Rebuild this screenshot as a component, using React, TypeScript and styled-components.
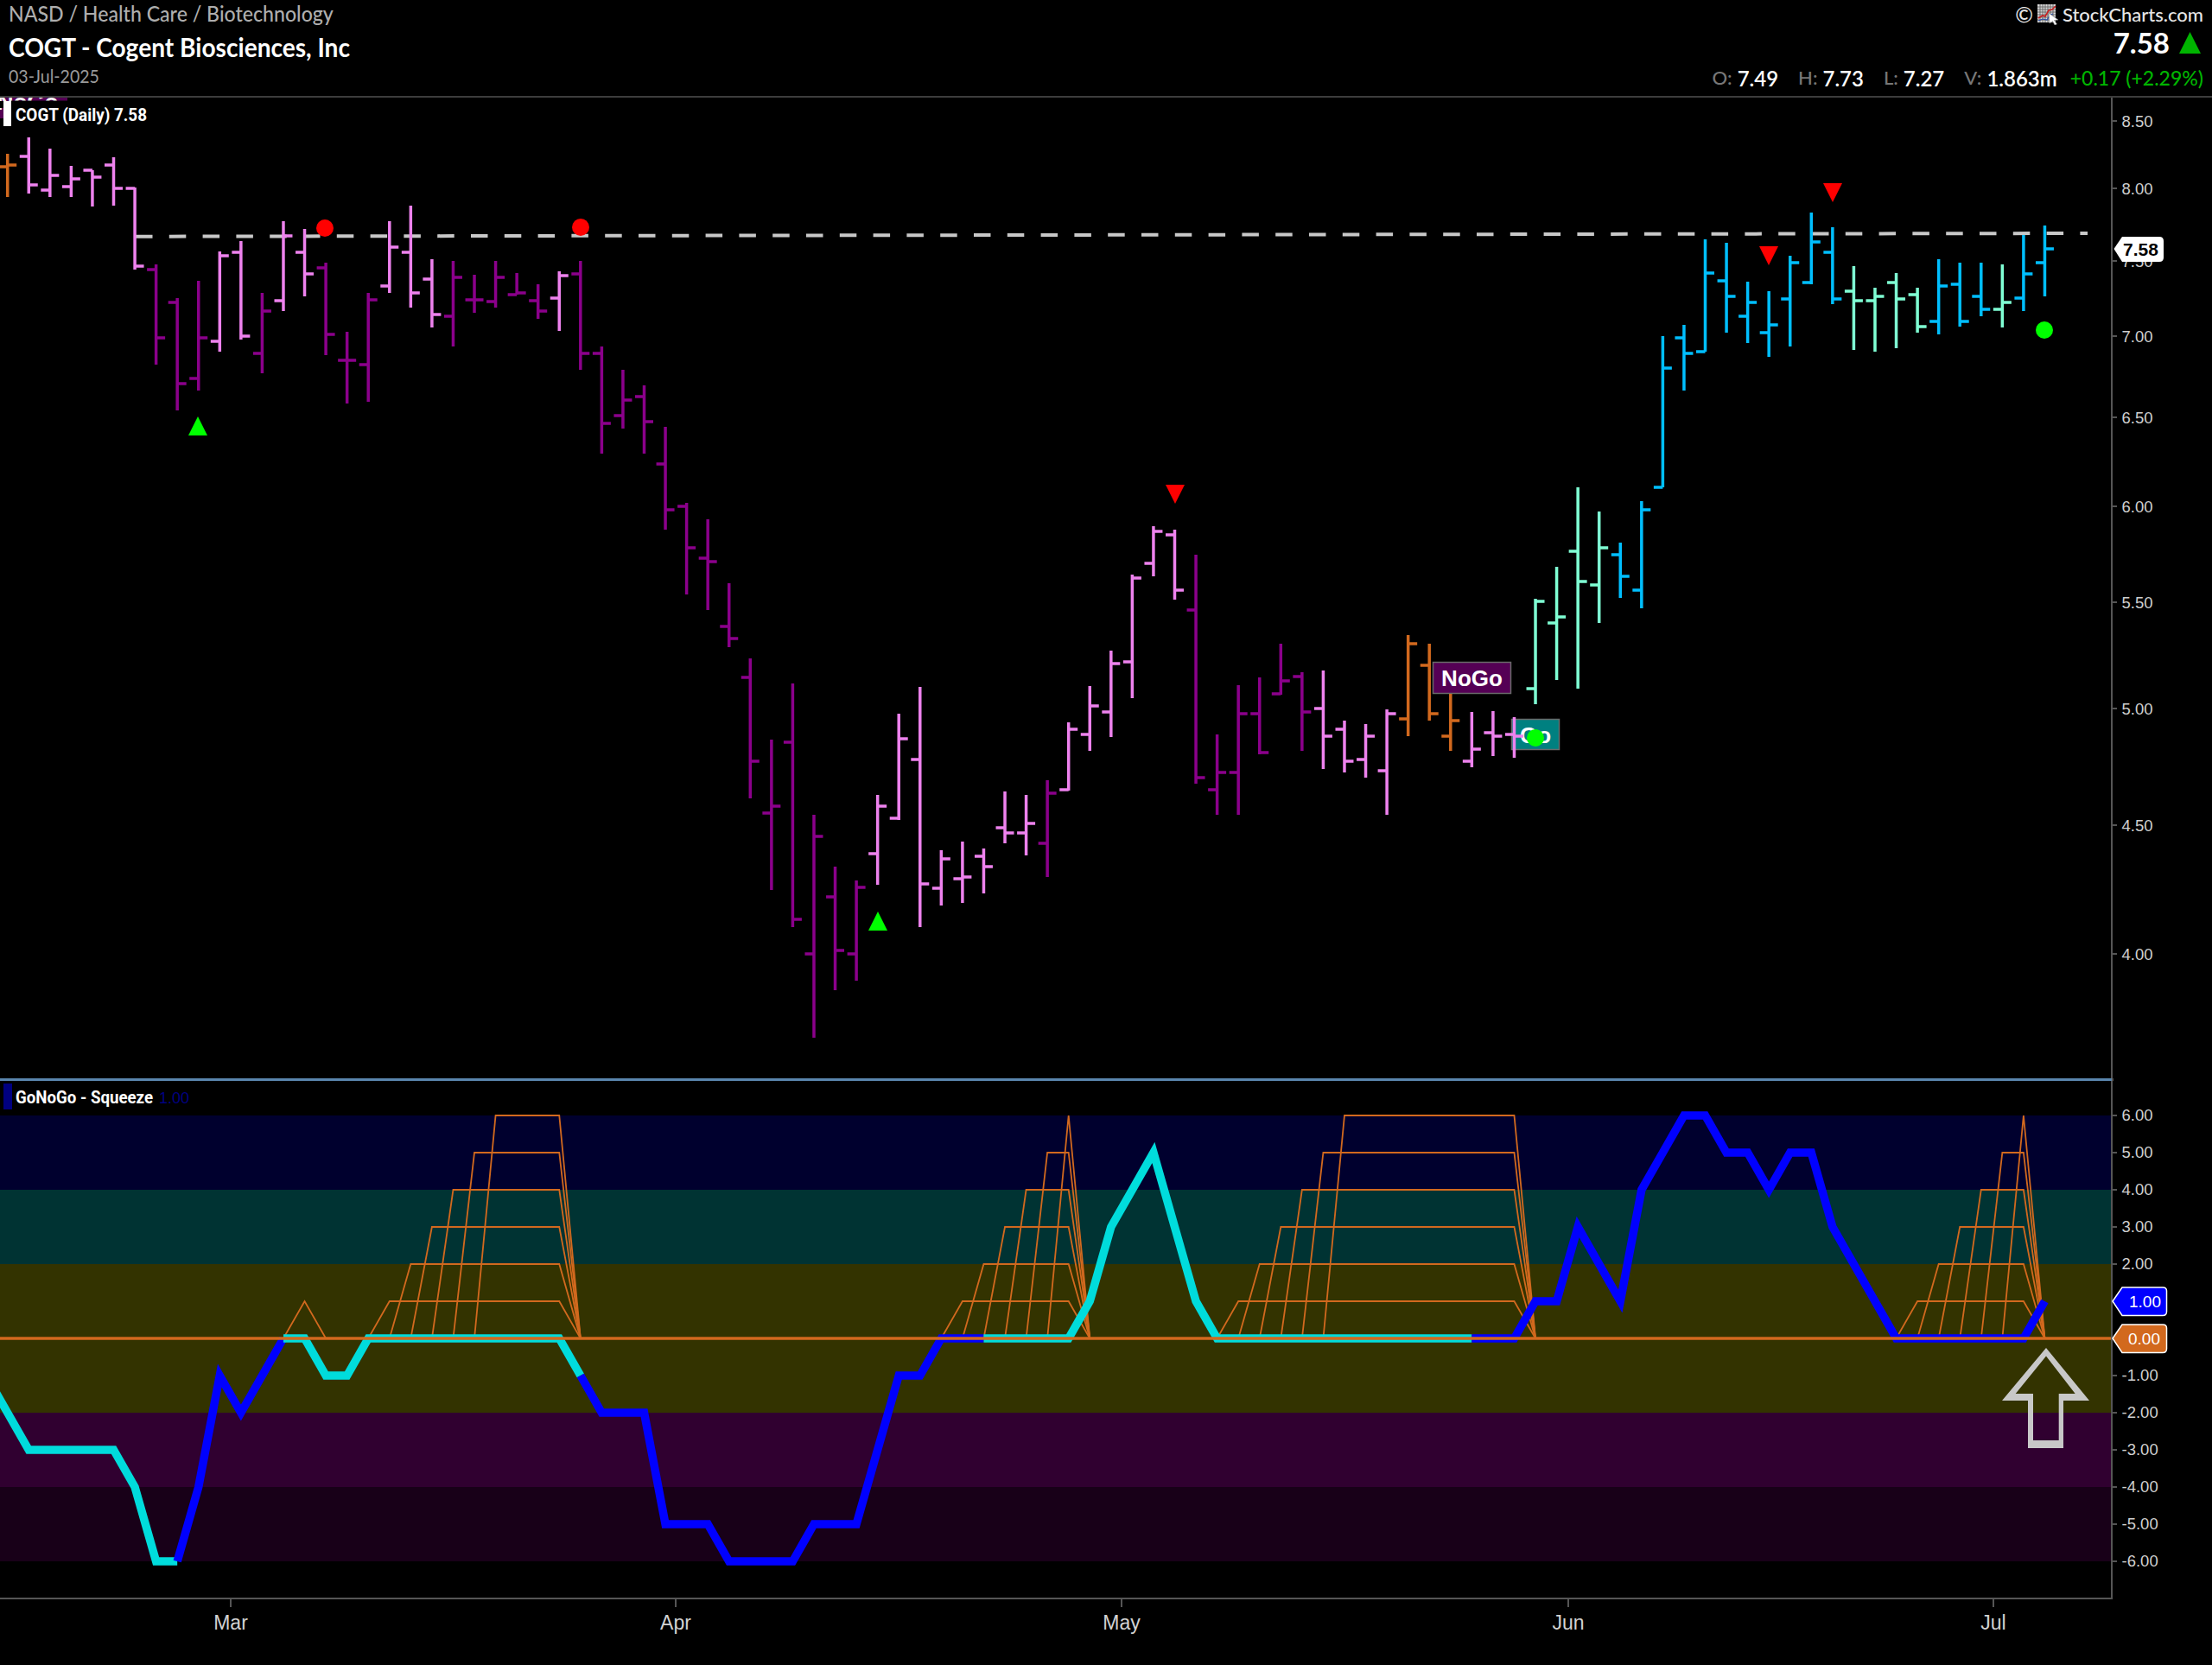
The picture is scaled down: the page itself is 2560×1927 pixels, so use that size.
import React from "react";
import styled, { createGlobalStyle } from "styled-components";

const GlobalStyle = createGlobalStyle`
  html, body { margin: 0; padding: 0; background: #000; }
  #root { width: 2560px; height: 1927px; }
`;

const Page = styled.div`
  width: 2560px;
  height: 1927px;
  background: #000;
  display: flex;
  flex-direction: column;
  overflow: hidden;
  font-family: Lato, "Liberation Sans", sans-serif;
`;
const Header = styled.header`
  height: 111px;
  box-sizing: content-box;
  border-bottom: 2px solid #3c3c3c;
  display: flex;
  justify-content: space-between;
  padding: 0 10px;
`;
const HeaderLeft = styled.div`
  display: flex;
  flex-direction: column;
`;
const Exchange = styled.div`
  margin-top: 0;
  font-size: 25px;
  line-height: 31px;
  font-weight: 500;
  color: #aeaeae;
  white-space: nowrap;
  transform: scaleX(0.925);
  transform-origin: left center;
`;
const Title = styled.div`
  margin-top: 5px;
  font-size: 31px;
  line-height: 36px;
  font-weight: 700;
  color: #fff;
  white-space: nowrap;
  transform: scaleX(0.906);
  transform-origin: left center;
`;
const DateLine = styled.div`
  margin-top: 3px;
  font-size: 21px;
  line-height: 26px;
  color: #9a9a9a;
  white-space: nowrap;
  transform: scaleX(0.93);
  transform-origin: left center;
`;
const HeaderRight = styled.div`
  display: flex;
  flex-direction: column;
  align-items: flex-end;
`;
const Brand = styled.div`
  margin-top: 3px;
  display: flex;
  align-items: center;
  gap: 6px;
  height: 26px;
  color: #e6e6e6;
  font-size: 22px;
  font-weight: 500;
  white-space: nowrap;
`;
const Copyright = styled.span`
  font-size: 25px;
  margin-right: -1px;
`;
const BrandMark = styled.svg`
  width: 25px;
  height: 25px;
  display: block;
  margin-right: -2px;
`;
const PriceRow = styled.div`
  margin-top: 5px;
  display: flex;
  align-items: center;
  gap: 11px;
  height: 30px;
  margin-right: 3px;
`;
const LastPrice = styled.span`
  font-size: 33px;
  font-weight: 700;
  color: #fff;
`;
const UpMark = styled.svg`
  width: 25px;
  height: 25px;
  display: block;
`;
const QuoteRow = styled.div`
  margin-top: 11px;
  display: flex;
  align-items: center;
  height: 30px;
  font-size: 24px;
  white-space: nowrap;
`;
const QuoteItem = styled.span`
  display: inline-flex;
  gap: 6px;
  margin-right: 23px;
`;
const QuoteLabel = styled.span`
  color: #777;
  font-size: 22px;
  font-weight: 500;
`;
const QuoteValue = styled.span`
  color: #fff;
  font-weight: 600;
`;
const QuoteChange = styled.span`
  color: #00b400;
  font-size: 23px;
  font-weight: 500;
  margin-left: -8px;
`;
const ChartSvg = styled.svg`
  display: block;
  width: 2560px;
  flex: none;
`;
const Separator = styled.div`
  flex: none;
  width: 2444px;
  height: 3px;
  background: #5a86ae;
  box-shadow: 2px 0 0 #555;
`;
const AxisText = styled.text`
  font-family: "Liberation Sans", Arial, sans-serif;
  font-size: 18.5px;
  fill: #cfcfcf;
`;
const DateText = styled.text`
  font-family: "Liberation Sans", Arial, sans-serif;
  font-size: 23px;
  fill: #d2d2d2;
  text-anchor: middle;
`;
const LegendText = styled.text`
  font-family: Roboto, "Liberation Sans", sans-serif;
  font-size: 21px;
  font-weight: 700;
  fill: #fff;
`;
const TagText = styled.text<{ $fill: string; $bold?: boolean }>`
  font-family: "Liberation Sans", Arial, sans-serif;
  font-size: ${(p) => (p.$bold ? "21px" : "19px")};
  font-weight: ${(p) => (p.$bold ? 700 : 400)};
  fill: ${(p) => p.$fill};
`;
const SignalText = styled.text`
  font-family: "Liberation Sans", Arial, sans-serif;
  font-size: 26px;
  font-weight: 700;
  fill: #fff;
  text-anchor: middle;
`;

type BarKind = "p" | "d" | "o" | "b" | "m";
const COLORS: Record<BarKind, string> = {
  p: "#ee82ee",
  d: "#8b008b",
  o: "#d2691e",
  b: "#00bfff",
  m: "#7fffd4",
};

// high, low, open, close, colour; x follows from the index
const BARS: [number, number, number, number, BarKind][] = [
  [178, 228, 193, 191, "o"], [159, 224, 181, 214, "p"], [172, 228, 220, 203, "p"], [192, 228, 216, 207, "p"],
  [197, 239, 197, 205, "p"], [182, 238, 191, 218, "p"], [217, 312, 218, 308, "p"], [306, 422, 312, 391, "d"],
  [345, 475, 350, 444, "d"], [325, 452, 438, 391, "d"], [291, 407, 395, 296, "p"], [279, 393, 292, 389, "p"],
  [339, 432, 409, 360, "d"], [256, 360, 348, 273, "p"], [265, 343, 292, 317, "p"], [304, 411, 310, 387, "d"],
  [384, 467, 417, 417, "d"], [339, 465, 422, 347, "d"], [256, 339, 331, 286, "p"], [238, 356, 292, 339, "p"],
  [300, 379, 323, 364, "p"], [302, 401, 366, 321, "d"], [318, 362, 347, 347, "d"], [302, 356, 349, 321, "d"],
  [316, 341, 341, 339, "d"], [329, 369, 348, 360, "d"], [314, 383, 345, 319, "p"], [302, 428, 317, 409, "d"],
  [401, 525, 409, 490, "d"], [428, 496, 481, 463, "d"], [446, 525, 459, 488, "d"], [494, 613, 537, 590, "d"],
  [582, 688, 586, 634, "d"], [601, 706, 646, 650, "d"], [675, 749, 725, 739, "d"], [762, 924, 784, 881, "d"],
  [856, 1030, 941, 933, "d"], [791, 1073, 859, 1064, "d"], [943, 1201, 1104, 968, "d"], [1003, 1146, 1038, 1100, "d"],
  [1019, 1135, 1104, 1027, "d"], [920, 1024, 988, 933, "p"], [826, 949, 947, 855, "p"], [795, 1073, 879, 1023, "p"],
  [984, 1048, 1028, 994, "p"], [974, 1045, 1017, 1015, "p"], [982, 1034, 991, 1003, "p"], [916, 976, 958, 964, "p"],
  [920, 990, 964, 953, "p"], [903, 1015, 976, 918, "d"], [836, 915, 914, 844, "p"], [794, 869, 850, 817, "p"],
  [753, 853, 824, 768, "p"], [665, 808, 766, 669, "p"], [609, 667, 652, 615, "p"], [613, 694, 619, 683, "p"],
  [642, 907, 706, 900, "d"], [850, 943, 914, 894, "d"], [793, 943, 894, 826, "d"], [784, 873, 826, 871, "d"],
  [745, 804, 803, 788, "d"], [778, 869, 783, 824, "d"], [776, 890, 820, 852, "p"], [834, 894, 844, 881, "p"],
  [838, 900, 879, 852, "p"], [821, 943, 892, 826, "p"], [735, 852, 832, 745, "o"], [745, 834, 770, 826, "o"],
  [803, 869, 852, 834, "o"], [824, 888, 881, 867, "p"], [823, 875, 848, 852, "p"], [830, 877, 850, 852, "p"],
  [693, 815, 797, 696, "m"], [656, 787, 721, 714, "m"], [564, 797, 638, 673, "m"], [592, 721, 677, 634, "m"],
  [628, 692, 642, 667, "b"], [580, 704, 683, 590, "b"], [389, 564, 564, 426, "b"], [376, 452, 391, 409, "b"],
  [277, 407, 407, 316, "b"], [281, 385, 325, 343, "b"], [326, 397, 366, 350, "b"], [337, 413, 385, 376, "b"],
  [296, 401, 346, 304, "b"], [246, 329, 327, 280, "b"], [263, 352, 292, 346, "b"], [308, 405, 337, 348, "m"],
  [333, 407, 348, 343, "m"], [316, 403, 327, 346, "m"], [333, 385, 341, 378, "m"], [300, 387, 372, 331, "b"],
  [304, 378, 329, 372, "b"], [304, 366, 343, 358, "b"], [306, 379, 358, 350, "m"], [272, 360, 345, 317, "b"],
  [261, 343, 304, 288, "b"],
];

const barX = (i: number) => 8.7 + 24.56 * i;
const oscY = (v: number) => 1549 - 43 * v;

const OSC = [
  -2, -3, -3, -3, -3, -3, -4, -6, -6, -4, -1, -2, -1, 0, 0, -1, -1, 0, 0, 0, 0, 0, 0, 0, 0, 0, 0, -1, -2, -2, -2, -5,
  -5, -5, -6, -6, -6, -6, -5, -5, -5, -3, -1, -1, 0, 0, 0, 0, 0, 0, 0, 1, 3, 4, 5, 3, 1, 0, 0, 0, 0, 0, 0, 0, 0, 0, 0,
  0, 0, 0, 0, 0, 1, 1, 3, 2, 1, 4, 5, 6, 6, 5, 5, 4, 5, 5, 3, 2, 1, 0, 0, 0, 0, 0, 0, 0, 1,
];

const oscPoints = (from: number, to: number) => {
  const pts: string[] = [];
  if (from < 0) pts.push(`${barX(-1)},${oscY(-1)}`);
  for (let i = Math.max(from, 0); i <= to; i++) pts.push(`${barX(i)},${oscY(OSC[i])}`);
  return pts.join(" ");
};

const SEGMENTS: { from: number; to: number; color: string }[] = [
  { from: -1, to: 8, color: "#00dcdc" },
  { from: 8, to: 13, color: "#0000ff" },
  { from: 13, to: 27, color: "#00dcdc" },
  { from: 27, to: 46, color: "#0000ff" },
  { from: 46, to: 69, color: "#00dcdc" },
  { from: 69, to: 96, color: "#0000ff" },
];

// each squeeze: first bar of the ladder and the bar where it ends
const LADDERS = [
  { start: 17, end: 26 },
  { start: 44, end: 50 },
  { start: 57, end: 71 },
  { start: 89, end: 95 },
];

const ladderPoints = (start: number, level: number, end: number) => {
  const s = start + level - 1;
  return [
    [barX(s), oscY(0)],
    [barX(s + 1), oscY(level)],
    [barX(end), oscY(level)],
    [barX(end + 1), oscY(0)],
  ]
    .map((p) => p.join(","))
    .join(" ");
};

const BANDS = [
  { from: 6, to: 4, color: "#00002e" },
  { from: 4, to: 2, color: "#003333" },
  { from: 2, to: -2, color: "#333300" },
  { from: -2, to: -4, color: "#300030" },
  { from: -4, to: -6, color: "#180018" },
];

const PRICE_TICKS = [
  { y: 140, t: "8.50" },
  { y: 218, t: "8.00" },
  { y: 302, t: "7.50" },
  { y: 389, t: "7.00" },
  { y: 483, t: "6.50" },
  { y: 586, t: "6.00" },
  { y: 697, t: "5.50" },
  { y: 820, t: "5.00" },
  { y: 955, t: "4.50" },
  { y: 1104, t: "4.00" },
];

const MONTHS = [
  { x: 267, t: "Mar" },
  { x: 782, t: "Apr" },
  { x: 1298, t: "May" },
  { x: 1815, t: "Jun" },
  { x: 2307, t: "Jul" },
];

const DownMark: React.FC<{ x: number; top: number }> = ({ x, top }) => (
  <polygon points={`${x - 11},${top} ${x + 11},${top} ${x},${top + 22}`} fill="#ff0000" />
);
const UpTriangle: React.FC<{ x: number; top: number }> = ({ x, top }) => (
  <polygon points={`${x},${top} ${x + 11},${top + 22} ${x - 11},${top + 22}`} fill="#00ff00" />
);

const PriceChart: React.FC = () => (
  <ChartSvg viewBox="0 113 2560 1135" height={1135}>
    <defs>
      <clipPath id="plot">
        <rect x={0} y={113} width={2444} height={1135} />
      </clipPath>
    </defs>
    <g clipPath="url(#plot)">
      <rect x={-13} y={100} width={91} height={37} fill="#550055" />
      <SignalText x={32} y={127}>NoGo</SignalText>
      <rect x={13} y={116.5} width={170} height={32} fill="#000" />
      <rect x={0} y={117} width={4} height={8} fill="#000" />
      <rect x={4} y={117} width={9} height={29} fill="#fff" />
      <line x1={157} y1={273.7} x2={2416} y2={270} stroke="#c8c8c8" strokeWidth={4} strokeDasharray="19.5 19.3" />
      <rect x={1658.5} y={766.5} width={90} height={36} fill="#550055" stroke="#6a6a6a" strokeWidth={1.5} />
      <SignalText x={1703.5} y={794}>NoGo</SignalText>
      <rect x={1749.5} y={832.5} width={55} height={35} fill="#008080" stroke="#6a6a6a" strokeWidth={1.5} />
      <SignalText x={1777} y={860}>Go</SignalText>
      {BARS.map(([h, l, o, c, k], i) => {
        const x = barX(i);
        const col = COLORS[k];
        return (
          <g key={i} stroke={col} strokeWidth={3.5}>
            <line x1={x} y1={h} x2={x} y2={l} />
            <line x1={x - 10.5} y1={o} x2={x} y2={o} />
            <line x1={x} y1={c} x2={x + 10.5} y2={c} />
          </g>
        );
      })}
      <circle cx={376} cy={264} r={10} fill="#ff0000" />
      <circle cx={672} cy={263} r={10} fill="#ff0000" />
      <UpTriangle x={229} top={482} />
      <UpTriangle x={1016} top={1055} />
      <DownMark x={1360} top={561} />
      <DownMark x={2047} top={285} />
      <DownMark x={2121} top={212} />
      <circle cx={1777} cy={854} r={10} fill="#00ff00" />
      <circle cx={2366} cy={382} r={10} fill="#00ff00" />
    </g>
    <LegendText x={18} y={140} textLength={152} lengthAdjust="spacingAndGlyphs">COGT (Daily) 7.58</LegendText>
    <line x1={2444} y1={113} x2={2444} y2={1248} stroke="#555" strokeWidth={2} />
    {PRICE_TICKS.map((p) => (
      <g key={p.t}>
        <line x1={2444} y1={p.y} x2={2450} y2={p.y} stroke="#555" strokeWidth={2} />
        <AxisText x={2455.5} y={p.y + 6.5}>{p.t}</AxisText>
      </g>
    ))}
    <path
      d="M2446.5 288 L2456 274 H2499 Q2504 274 2504 279 V298 Q2504 303 2499 303 H2456 Z"
      fill="#fff"
    />
    <TagText $fill="#000" $bold x={2457} y={296}>7.58</TagText>
  </ChartSvg>
);

const IndicatorChart: React.FC = () => (
  <ChartSvg viewBox="0 1251 2560 676" height={676}>
    {BANDS.map((b) => (
      <rect key={b.from} x={0} y={oscY(b.from)} width={2444} height={oscY(b.to) - oscY(b.from)} fill={b.color} />
    ))}
    <rect x={4} y={1254} width={10} height={30} fill="#000080" />
    <LegendText x={18} y={1277} textLength={159} lengthAdjust="spacingAndGlyphs">GoNoGo - Squeeze</LegendText>
    <TagText $fill="#000080" x={184} y={1277} textLength={35} lengthAdjust="spacingAndGlyphs">1.00</TagText>
    <g fill="none" stroke="#d2691e" strokeWidth={1.8} strokeLinejoin="miter">
      <polyline points={`${barX(13)},${oscY(0)} ${barX(14)},${oscY(1)} ${barX(15)},${oscY(0)}`} />
      {LADDERS.map((s) =>
        [1, 2, 3, 4, 5, 6].map((lvl) => (
          <polyline key={`${s.start}-${lvl}`} points={ladderPoints(s.start, lvl, s.end)} />
        ))
      )}
    </g>
    <g fill="none" strokeWidth={9.5} strokeLinejoin="miter" strokeMiterlimit={10}>
      {SEGMENTS.map((s) => (
        <polyline key={s.from} points={oscPoints(s.from, s.to)} stroke={s.color} />
      ))}
    </g>
    <line x1={0} y1={1549} x2={2444} y2={1549} stroke="#d2691e" strokeWidth={3.5} />
    <path
      fillRule="evenodd"
      fill="#c8c8c8"
      d="M2368 1560 L2418 1621 H2388 V1676 H2347 V1621 H2317 Z M2368 1569.5 L2332.7 1613 H2353 V1667 H2382.7 V1613 H2401.7 Z"
    />
    <line x1={2444} y1={1251} x2={2444} y2={1851} stroke="#555" strokeWidth={2} />
    <line x1={0} y1={1850} x2={2445} y2={1850} stroke="#555" strokeWidth={2} />
    {[6, 5, 4, 3, 2, 1, 0, -1, -2, -3, -4, -5, -6].map((v) => (
      <g key={v}>
        <line x1={2444} y1={oscY(v)} x2={2450} y2={oscY(v)} stroke="#555" strokeWidth={2} />
        {v !== 1 && v !== 0 && (
          <AxisText x={2455.5} y={oscY(v) + 5.5}>{v.toFixed(2)}</AxisText>
        )}
      </g>
    ))}
    <path
      d="M2445 1506 L2456 1490 H2503 Q2507.5 1490 2507.5 1494 V1518 Q2507.5 1522.5 2503 1522.5 H2456 Z"
      fill="#0000ff"
      stroke="#fff"
      strokeWidth={1.5}
    />
    <TagText $fill="#fff" x={2464} y={1513}>1.00</TagText>
    <path
      d="M2445 1549 L2456 1533 H2503 Q2507.5 1533 2507.5 1537 V1561 Q2507.5 1565.5 2503 1565.5 H2456 Z"
      fill="#d2691e"
      stroke="#fff"
      strokeWidth={1.5}
    />
    <TagText $fill="#fff" x={2463} y={1556}>0.00</TagText>
    {MONTHS.map((m) => (
      <g key={m.t}>
        <line x1={m.x} y1={1850} x2={m.x} y2={1860} stroke="#555" strokeWidth={2} />
        <DateText x={m.x} y={1886}>{m.t}</DateText>
      </g>
    ))}
  </ChartSvg>
);

const StockChartsMark: React.FC = () => (
  <BrandMark viewBox="0 0 25 25">
    <rect x={0} y={1} width={21} height={21} fill="#d8d8d8" />
    <g stroke="#555" strokeWidth={0.8}>
      {[3, 6, 9, 12, 15, 18].map((p) => (
        <React.Fragment key={p}>
          <line x1={p} y1={1} x2={p} y2={22} />
          <line x1={0} y1={p + 1} x2={21} y2={p + 1} />
        </React.Fragment>
      ))}
    </g>
    <polyline points="1,17 6,14 9,15 13,8 17,7 21,3" fill="none" stroke="#c82020" strokeWidth={1.6} />
    <polyline points="1,20 6,18 11,19 15,13 18,12" fill="none" stroke="#2a4fa8" strokeWidth={1.2} />
    <path d="M13 11 L24 19 L19.5 19.5 L22.5 24 L20 25 L17.5 20.5 L14 23 Z" fill="#fff" stroke="#777" strokeWidth={0.6} />
  </BrandMark>
);

const QUOTES = [
  { l: "O:", v: "7.49" },
  { l: "H:", v: "7.73" },
  { l: "L:", v: "7.27" },
  { l: "V:", v: "1.863m" },
];

export default function App() {
  return (
    <Page>
      <GlobalStyle />
      <Header>
        <HeaderLeft>
          <Exchange>NASD / Health Care / Biotechnology</Exchange>
          <Title>COGT - Cogent Biosciences, Inc</Title>
          <DateLine>03-Jul-2025</DateLine>
        </HeaderLeft>
        <HeaderRight>
          <Brand>
            <Copyright>©</Copyright>
            <StockChartsMark />
            <span>StockCharts.com</span>
          </Brand>
          <PriceRow>
            <LastPrice>7.58</LastPrice>
            <UpMark viewBox="0 0 24 24">
              <polygon points="12,0 24,24 0,24" fill="#00b400" />
            </UpMark>
          </PriceRow>
          <QuoteRow>
            {QUOTES.map((q) => (
              <QuoteItem key={q.l}>
                <QuoteLabel>{q.l}</QuoteLabel>
                <QuoteValue>{q.v}</QuoteValue>
              </QuoteItem>
            ))}
            <QuoteChange>+0.17 (+2.29%)</QuoteChange>
          </QuoteRow>
        </HeaderRight>
      </Header>
      <PriceChart />
      <Separator />
      <IndicatorChart />
    </Page>
  );
}
